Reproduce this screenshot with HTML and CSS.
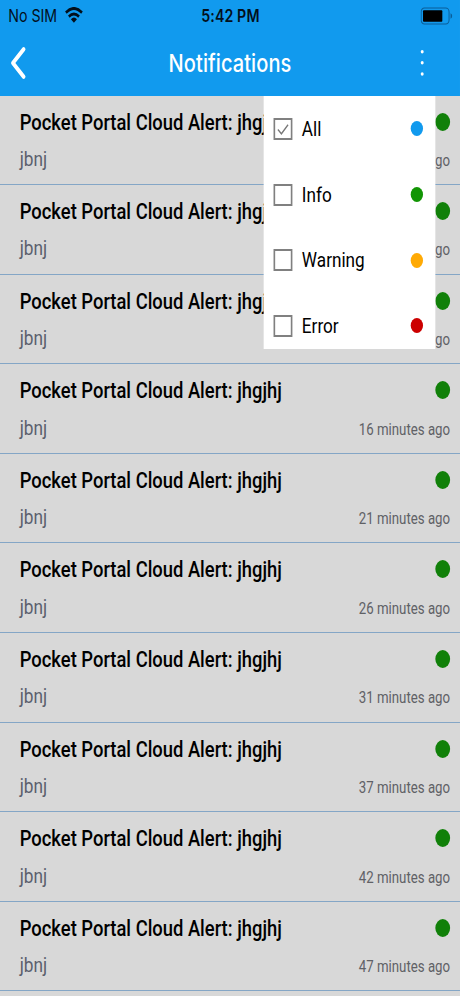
FILE: index.html
```
<!DOCTYPE html>
<html lang="en">
<head>
<meta charset="utf-8">
<title>Notifications</title>
<link rel="stylesheet" href="styles.css">
</head>
<body>
<div class="viewport">
<div class="screen">
  <header class="header">
    <div class="status">
      <div class="carrier"><span>No SIM</span>
        <svg class="wifi" width="22" height="16" viewBox="0 0 22 16"><g fill="none" stroke="#03101c" stroke-width="3"><path d="M1.2 5.7Q11-2.7 20.8 5.7"/><path d="M4.8 9.7Q11 4.3 17.2 9.7"/></g><path d="M7.3 12.2Q11 9 14.7 12.2L11 15.8z" fill="#03101c"/></svg>
      </div>
      <span class="clock">5:42 PM</span>
      <svg class="battery" width="39" height="18" viewBox="0 0 39 18"><rect x=".7" y="1" width="34" height="16" rx="4" fill="none" stroke="#0b5d98" stroke-width="1.2"/><rect x="3" y="3.2" width="23.5" height="11.6" rx="1" fill="#000"/><path d="M36.5 6.3Q38.5 7 38.5 9T36.5 11.7z" fill="#0b5d98"/></svg>
    </div>
    <nav class="nav">
      <svg class="back" width="21" height="34" viewBox="0 0 21 34"><path d="M17.8 3.3L4.7 17L17.8 30.7" fill="none" stroke="#fff" stroke-width="4.4" stroke-linecap="round" stroke-linejoin="round"/></svg>
      <h1>Notifications</h1>
      <svg class="more" width="6" height="28" viewBox="0 0 6 28" fill="#fff"><circle cx="3" cy="2.7" r="1.8"/><circle cx="3" cy="13.8" r="1.8"/><circle cx="3" cy="25" r="1.8"/></svg>
    </nav>
    <div class="menu">
      <div class="option"><i class="box"><svg width="20" height="18" viewBox="0 0 20 18"><path d="M3.5 9.5L8 14L16.5 4.5" fill="none" stroke="#777" stroke-width="1.7"/></svg></i><span>All</span><b class="dot all"></b></div>
      <div class="option"><i class="box"></i><span>Info</span><b class="dot info"></b></div>
      <div class="option"><i class="box"></i><span>Warning</span><b class="dot warning"></b></div>
      <div class="option"><i class="box"></i><span>Error</span><b class="dot error"></b></div>
    </div>
  </header>
  <main>
    <article class="row"><div class="top"><h2>Pocket Portal Cloud Alert: jhgjhj</h2><b class="mark"></b></div><div class="bottom"><p>jbnj</p><time>1 minute ago</time></div></article>
    <article class="row"><div class="top"><h2>Pocket Portal Cloud Alert: jhgjhj</h2><b class="mark"></b></div><div class="bottom"><p>jbnj</p><time>6 minutes ago</time></div></article>
    <article class="row"><div class="top"><h2>Pocket Portal Cloud Alert: jhgjhj</h2><b class="mark"></b></div><div class="bottom"><p>jbnj</p><time>11 minutes ago</time></div></article>
    <article class="row"><div class="top"><h2>Pocket Portal Cloud Alert: jhgjhj</h2><b class="mark"></b></div><div class="bottom"><p>jbnj</p><time>16 minutes ago</time></div></article>
    <article class="row"><div class="top"><h2>Pocket Portal Cloud Alert: jhgjhj</h2><b class="mark"></b></div><div class="bottom"><p>jbnj</p><time>21 minutes ago</time></div></article>
    <article class="row"><div class="top"><h2>Pocket Portal Cloud Alert: jhgjhj</h2><b class="mark"></b></div><div class="bottom"><p>jbnj</p><time>26 minutes ago</time></div></article>
    <article class="row"><div class="top"><h2>Pocket Portal Cloud Alert: jhgjhj</h2><b class="mark"></b></div><div class="bottom"><p>jbnj</p><time>31 minutes ago</time></div></article>
    <article class="row"><div class="top"><h2>Pocket Portal Cloud Alert: jhgjhj</h2><b class="mark"></b></div><div class="bottom"><p>jbnj</p><time>37 minutes ago</time></div></article>
    <article class="row"><div class="top"><h2>Pocket Portal Cloud Alert: jhgjhj</h2><b class="mark"></b></div><div class="bottom"><p>jbnj</p><time>42 minutes ago</time></div></article>
    <article class="row"><div class="top"><h2>Pocket Portal Cloud Alert: jhgjhj</h2><b class="mark"></b></div><div class="bottom"><p>jbnj</p><time>47 minutes ago</time></div></article>
  </main>
</div>
</div>
</body>
</html>
```
FILE: styles.css
```
* { box-sizing: border-box; }
body { margin: 0; background: #d8d8d8; }
.viewport { width: 100%; height: 996px; overflow: clip; }
/* 560 units wide, condensed to the 460px viewport */
.screen {
  width: 560px;
  height: 996px;
  overflow: hidden;
  transform: scaleX(0.8214);
  transform-origin: 0 0;
  background: #d8d8d8;
  font-family: Roboto, sans-serif;
  color: #000;
}
.header { position: relative; height: 96px; background: #119aee; }
.status {
  display: grid;
  grid-template-columns: 1fr auto 1fr;
  align-items: center;
  height: 32px;
  padding: 0 9px 0 10px;
  font: 400 17.3px/32px Inter, sans-serif;
  color: #03101c;
}
.carrier { display: flex; align-items: center; gap: 9px; }
.wifi { margin-top: -2px; }
.clock { font-weight: 600; letter-spacing: 0.15px; }
.battery { justify-self: end; }
.nav {
  display: grid;
  grid-template-columns: 1fr auto 1fr;
  align-items: center;
  height: 62px;
  padding: 0 43px 0 11px;
}
.nav h1 {
  margin: 0 0 0 32px;
  font: 500 24.4px/30px Inter, sans-serif;
  letter-spacing: 0.1px;
  color: #fff;
}
.more { justify-self: end; }
.menu {
  position: absolute;
  z-index: 2;
  top: 96px;
  left: 321px;
  width: 209px;
  height: 253px;
  background: #fff;
}
.option {
  display: flex;
  align-items: center;
  height: 65.7px;
  padding: 0 15.5px 0 11.5px;
  font-size: 20.9px;
}
.option span { margin-left: 12px; }
.box {
  display: flex;
  width: 23px;
  height: 22px;
  border: 2px solid #808080;
}
.dot { width: 15px; height: 15px; margin-left: auto; border-radius: 50%; }
.all { background: #119aee; }
.info { background: #129504; }
.warning { background: #ffaa05; }
.error { background: #cc0000; }
.row {
  height: 89.6px;
  padding: 12px 12px 0 24px;
  border-bottom: 1.5px solid #84a6c6;
}
main { margin-top: -0.5px; }
.top, .bottom { display: flex; justify-content: space-between; }
.top { align-items: center; height: 28px; }
.row h2 { margin: 0; font-weight: 500; font-size: 22.4px; line-height: 28px; }
.mark { width: 18px; height: 18px; border-radius: 50%; background: #118009; }
.bottom { align-items: baseline; margin-top: 10.3px; line-height: 26px; }
.bottom p { margin: 0; font-size: 21px; color: #5b5f6d; }
time { font-size: 16.15px; color: #606166; }
```
